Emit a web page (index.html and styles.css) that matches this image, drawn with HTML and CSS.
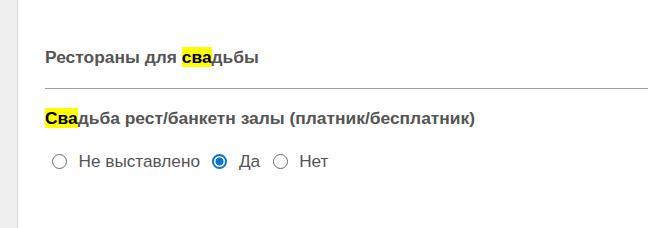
FILE: index.html
```html
<!DOCTYPE html>
<html lang="ru">
<head>
  <meta charset="UTF-8" />
  <title>Рестораны для свадьбы</title>
  <link rel="stylesheet" href="styles.css">
</head>
<body>

<div class="layout">
  <div class="sidebar"></div>

  <div class="content">
    <h2 class="section-title">Рестораны для <mark>сва</mark>дьбы</h2>
    <hr class="divider">

    <div class="field">
      <div class="field-label"><mark>Сва</mark>дьба рест/банкетн залы (платник/бесплатник)</div>
      <div class="options">
        <label class="option"><input type="radio" name="paid" value="none"> Не выставлено</label>
        <label class="option"><input type="radio" name="paid" value="yes" checked> Да</label>
        <label class="option"><input type="radio" name="paid" value="no"> Нет</label>
      </div>
    </div>
  </div>
</div>

</body>
</html>
```

FILE: styles.css
```css
html, body {
  margin: 0;
  height: 100%;
  background-color: #fff;
  color: #555;
  font-family: "Liberation Sans", Arial, sans-serif;
}

.layout {
  display: flex;
  height: 100%;
}

.sidebar {
  width: 17px;
  background-color: #f0f0f0;
  border-right: 1px solid #d6d6d6;
  flex-shrink: 0;
}

.content {
  flex: 1;
  padding: 47px 0 0 27px;
}

.section-title {
  margin: 0;
  font-size: 17.4px;
  font-weight: bold;
  line-height: 20px;
  color: #555;
}

mark {
  background-color: #ffff00;
  color: #000;
}

.divider {
  margin: 21px 0 0 0;
  border: none;
  border-top: 1px solid #a0a0a0;
  height: 0;
}

.field {
  padding-top: 19px;
}

.field-label {
  font-size: 17.4px;
  font-weight: bold;
  line-height: 20px;
}

.options {
  margin-top: 23px;
  display: flex;
  align-items: center;
  font-size: 17.2px;
  line-height: 20px;
}

.option {
  display: flex;
  align-items: center;
  margin-right: 5.5px;
}

.option input {
  appearance: none;
  box-sizing: border-box;
  width: 15px;
  height: 15px;
  margin: 0 11.5px 0 7px;
  border: 1px solid #6b6b6b;
  border-radius: 50%;
  background-color: #fff;
}

.option input:checked {
  border: 2px solid #0a74d6;
  background: radial-gradient(circle, #0a74d6 0 3.8px, #fff 4.3px);
}
```
